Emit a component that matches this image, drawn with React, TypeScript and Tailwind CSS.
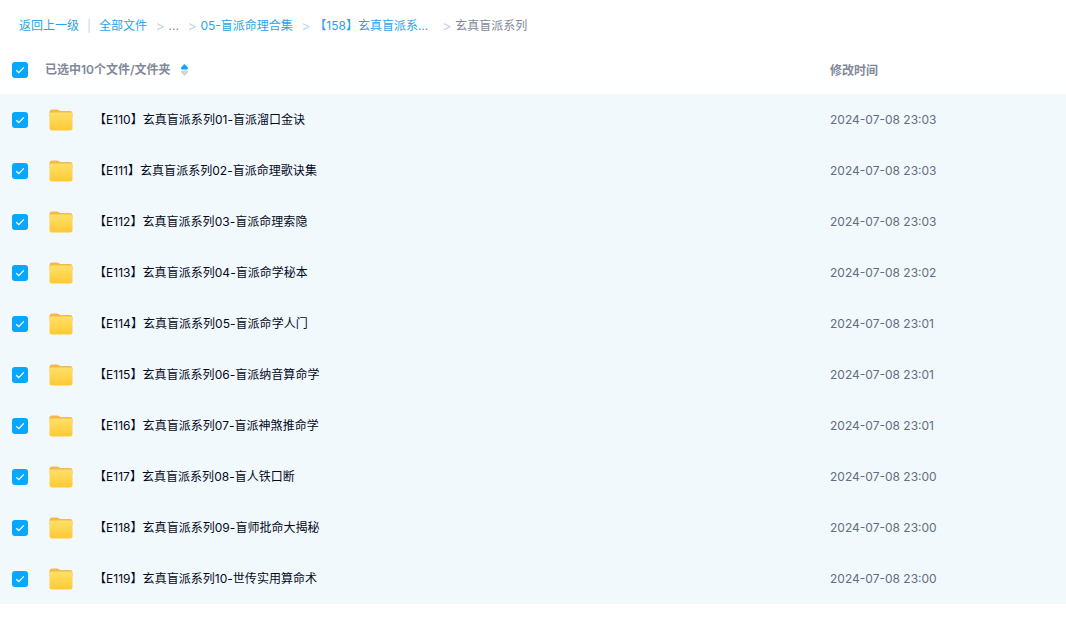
const rows = [
  ["【E110】玄真盲派系列01-盲派溜口金诀", "2024-07-08 23:03"],
  ["【E111】玄真盲派系列02-盲派命理歌诀集", "2024-07-08 23:03"],
  ["【E112】玄真盲派系列03-盲派命理索隐", "2024-07-08 23:03"],
  ["【E113】玄真盲派系列04-盲派命学秘本", "2024-07-08 23:02"],
  ["【E114】玄真盲派系列05-盲派命学人门", "2024-07-08 23:01"],
  ["【E115】玄真盲派系列06-盲派纳音算命学", "2024-07-08 23:01"],
  ["【E116】玄真盲派系列07-盲派神煞推命学", "2024-07-08 23:01"],
  ["【E117】玄真盲派系列08-盲人铁口断", "2024-07-08 23:00"],
  ["【E118】玄真盲派系列09-盲师批命大揭秘", "2024-07-08 23:00"],
  ["【E119】玄真盲派系列10-世传实用算命术", "2024-07-08 23:00"],
];

function Check() {
  return (
    <div className="flex h-4 w-4 shrink-0 items-center justify-center rounded-[3px] bg-[#06a7ff]">
      <svg width="10" height="8" viewBox="0 0 10 8" fill="none">
        <path d="M1.2 4.2 L3.8 6.6 L8.8 1.4" stroke="#fff" strokeWidth="1.3" />
      </svg>
    </div>
  );
}

function Folder() {
  return (
    <svg width="24" height="22" viewBox="0 0 24 22" className="shrink-0">
      <defs>
        <linearGradient id="fg" x1="0" y1="0" x2="0" y2="1">
          <stop offset="0" stopColor="#ffe06a" />
          <stop offset="1" stopColor="#ffc933" />
        </linearGradient>
      </defs>
      <path d="M0.5 3 Q0.5 0.5 3 0.5 H8 Q10 0.5 11 2 H21.5 Q23.5 2 23.5 4.5 V8 H0.5 Z" fill="#f3b94c" />
      <path d="M0.5 5.5 Q0.5 3.5 2.5 3.5 H21.5 Q23.5 3.5 23.5 5.5 V19 Q23.5 21.5 21 21.5 H3 Q0.5 21.5 0.5 19 Z" fill="url(#fg)" />
    </svg>
  );
}

function SortIcon() {
  return (
    <svg width="7" height="12" viewBox="0 0 7 12" className="ml-[10px] shrink-0">
      <path d="M3.5 0 L6.4 3 Q7 3.7 7 4.4 Q7 5.5 5.6 5.5 H1.4 Q0 5.5 0 4.4 Q0 3.7 0.6 3 Z" fill="#06a7ff" />
      <path d="M3.5 12 L6.4 9 Q7 8.3 7 7.6 Q7 6.5 5.6 6.5 H1.4 Q0 6.5 0 7.6 Q0 8.3 0.6 9 Z" fill="#d0d4da" />
    </svg>
  );
}

function Sep() {
  return <span className="w-[21.5px] pl-[8.5px] text-[14px] leading-[16px] text-[#c4d8f4]">&gt;</span>;
}

export default function App() {
  return (
    <div className="h-[631px] w-[1066px] overflow-hidden bg-white font-['Inter','Noto_Sans_CJK_SC',sans-serif]">
      <div className="flex h-[44px] items-start pl-[19px] pt-[18px] text-[12px] leading-[16px] text-[#06a7ff]">
        <span className="text-[#2ba3e8]">返回上一级</span>
        <span className="mx-[8px] text-[#c4d8f4]">|</span>
        <span className="text-[#2ba3e8]">全部文件</span>
        <Sep />
        <span className="text-[#818999]">...</span>
        <Sep />
        <span className="text-[#2ba3e8]">05-盲派命理合集</span>
        <Sep />
        <span className="w-[119.5px] text-[#2ba3e8]">【158】玄真盲派系...</span>
        <Sep />
        <span className="text-[#818999]">玄真盲派系列</span>
      </div>
      <div className="flex h-[50px] items-center pt-[1px] text-[12px] font-semibold text-[#818999]">
        <div className="ml-[12px] w-[33px]"><Check /></div>
        <span>已选中10个文件/文件夹</span>
        <SortIcon />
        <span className="ml-auto w-[236px] pt-[2px]">修改时间</span>
      </div>
      <div className="bg-[#f2f9fd]">
        {rows.map(([name, date]) => (
          <div key={name} className="flex h-[51px] items-center text-[12px]">
            <div className="ml-[12px] w-[37px]"><Check /></div>
            <Folder />
            <span className="ml-[21px] tracking-[0.03px] text-[#03081a]">{name}</span>
            <span className="ml-auto w-[236px] text-[#636d7e]">{date}</span>
          </div>
        ))}
      </div>
    </div>
  );
}
